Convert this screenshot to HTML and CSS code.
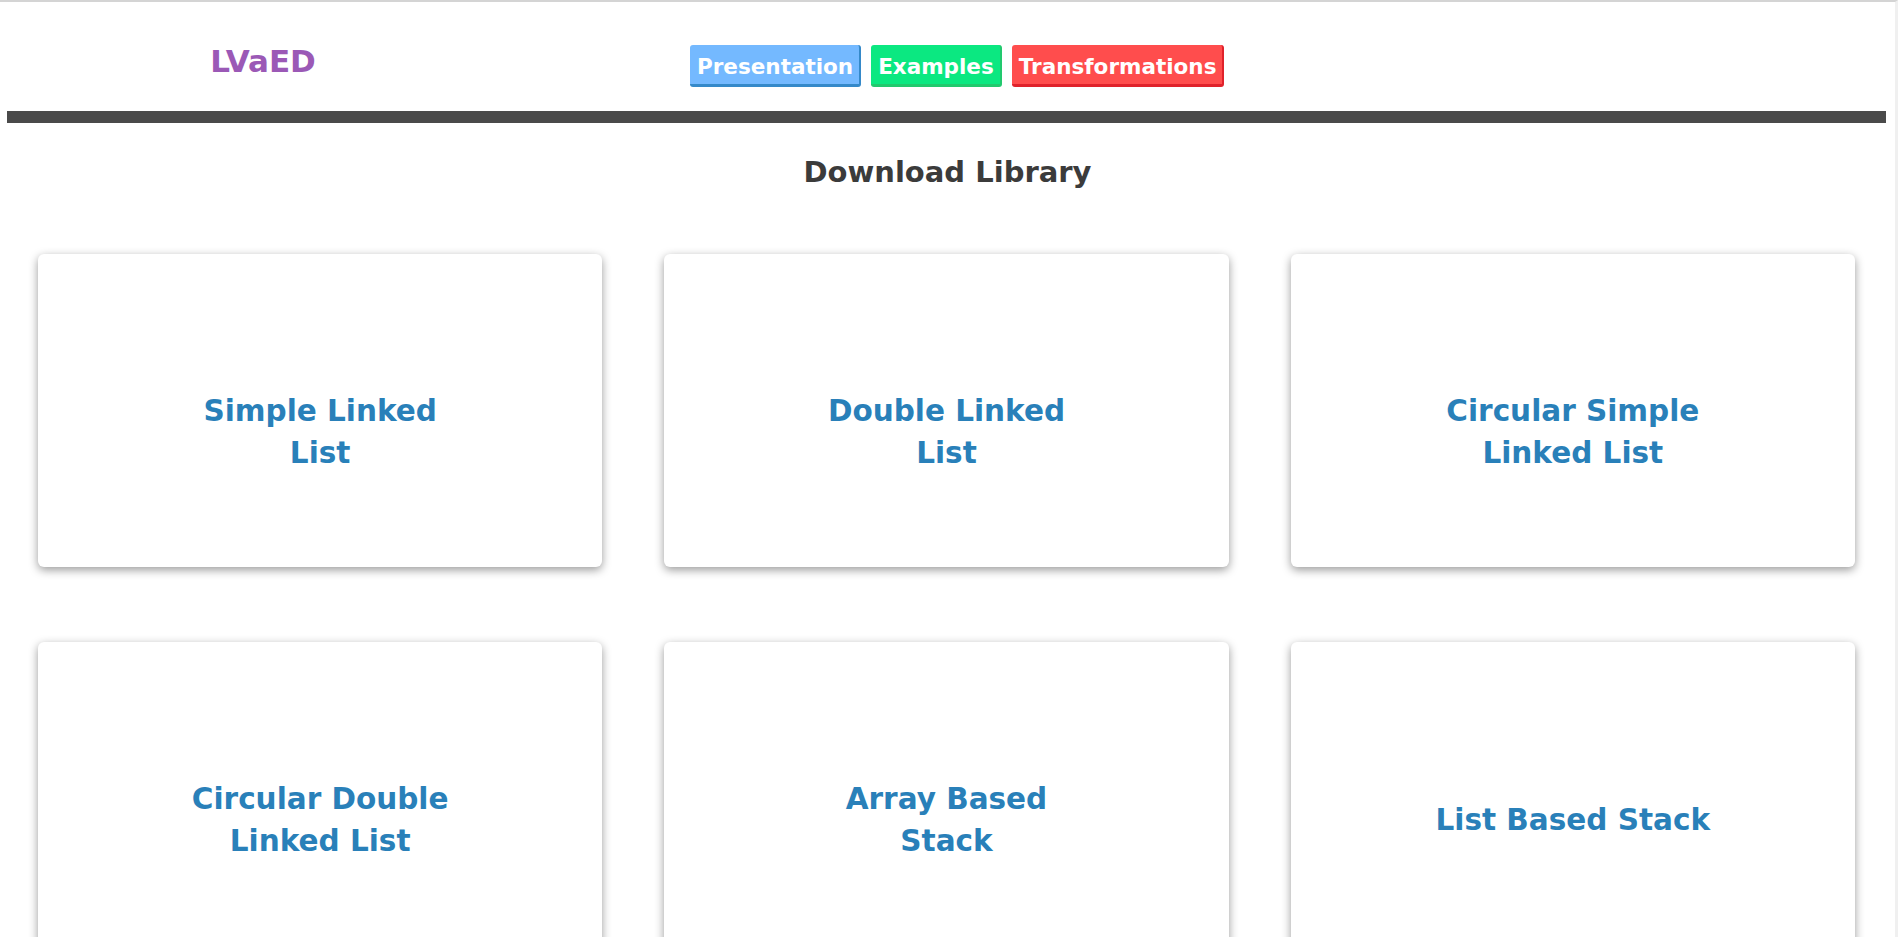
FILE: index.html
```html
<!DOCTYPE html>
<html lang="en">
<head>
<meta charset="utf-8">
<title>LVaED - Download Library</title>
<link rel="stylesheet" href="styles.css">
</head>
<body>
<div class="frame">
  <header class="header">
    <div class="logo">LVaED</div>
    <nav class="nav">
      <a class="btn btn-blue" href="#">Presentation</a>
      <a class="btn btn-green" href="#">Examples</a>
      <a class="btn btn-red" href="#">Transformations</a>
    </nav>
  </header>
  <div class="bar"></div>
  <h2 class="title">Download Library</h2>
  <main class="grid">
    <a class="card" href="#"><span class="card-text">Simple Linked List</span></a>
    <a class="card" href="#"><span class="card-text">Double Linked List</span></a>
    <a class="card" href="#"><span class="card-text">Circular Simple Linked List</span></a>
    <a class="card" href="#"><span class="card-text">Circular Double Linked List</span></a>
    <a class="card" href="#"><span class="card-text">Array Based Stack</span></a>
    <a class="card" href="#"><span class="card-text">List Based Stack</span></a>
  </main>
</div>
</body>
</html>
```

FILE: styles.css
```css
* { box-sizing: border-box; }
html, body { margin: 0; padding: 0; background: #ffffff; }
body {
  font-family: "DejaVu Sans", Verdana, sans-serif;
  font-weight: bold;
  overflow: hidden;
}
.frame {
  border-top: 2px solid #d4d4d4;
  border-right: 3px solid #f0f0f0;
  min-height: 100vh;
}
.header {
  display: flex;
  align-items: flex-start;
  height: 109px;
  padding-top: 41px;
}
.logo {
  width: 526px;
  text-align: center;
  color: #9b59b6;
  font-size: 31px;
  line-height: 36px;
}
.nav {
  display: flex;
  gap: 10px;
  margin-left: 164px;
  margin-top: 2px;
}
.btn {
  display: block;
  color: #ffffff;
  text-decoration: none;
  font-size: 21.5px;
  line-height: 26px;
  padding: 9px 6px 4px 7px;
  border-radius: 3px;
  border-right: 2px solid transparent;
  border-bottom: 3px solid transparent;
}
.btn-blue { background: #74b9ff; border-color: #3589c9; }
.btn-green { background: #0be881; border-color: #22c96e; }
.btn-red { background: #ff4d4d; border-color: #e0222b; }
.bar {
  height: 12px;
  background: #4a4a4a;
  margin: 0 9px 0 7px;
}
.title {
  margin: 32px 0 0;
  text-align: center;
  color: #3b3b3b;
  font-size: 29px;
  line-height: 34px;
}
.grid {
  display: grid;
  grid-template-columns: repeat(3, 1fr);
  column-gap: 62px;
  row-gap: 75px;
  padding: 65px 40px 0 38px;
}
.card {
  height: 313px;
  background: #ffffff;
  border-radius: 6px;
  box-shadow: 0 3px 10px rgba(0, 0, 0, 0.4);
  display: flex;
  align-items: center;
  justify-content: center;
  padding-top: 43px;
  text-decoration: none;
}
.card-text {
  width: 50%;
  text-align: center;
  color: #2980b9;
  font-size: 29.5px;
  line-height: 42px;
}
```
